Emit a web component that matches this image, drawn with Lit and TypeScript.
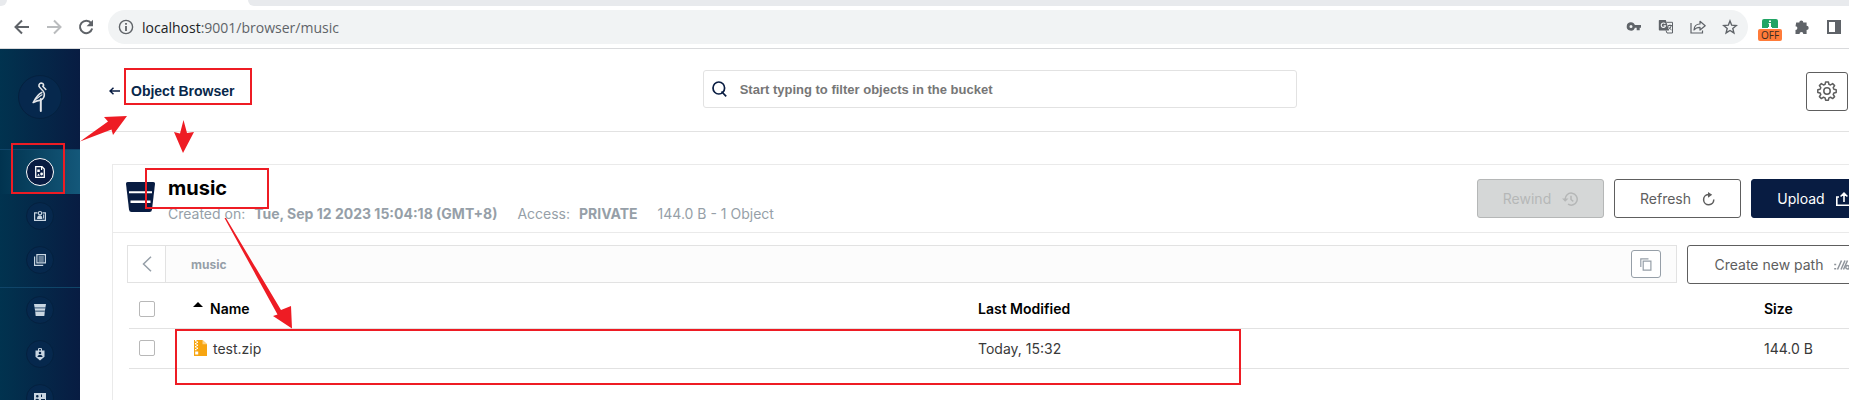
import { LitElement, html, css, svg } from "lit";
import { customElement } from "lit/decorators.js";

const INK = "#5f6368";

const icons = {
  back: html`<svg width="16" height="16" viewBox="0 0 16 16" fill="none" stroke=${INK} stroke-width="2"><path d="M15 8H2M8 1.5 1.5 8 8 14.5"/></svg>`,
  forward: html`<svg width="16" height="16" viewBox="0 0 16 16" fill="none" stroke="#babcbe" stroke-width="2"><path d="M1 8h13M8 1.5 14.5 8 8 14.5"/></svg>`,
  reload: html`<svg width="16" height="16" viewBox="0 0 16 16"><path d="M13.2 4.2A6.2 6.2 0 1 0 14.2 9.6" fill="none" stroke=${INK} stroke-width="2"/><path d="M15 .8v6.4H8.6z" fill=${INK}/></svg>`,
  info: html`<svg width="16" height="16" viewBox="0 0 16 16"><circle cx="8" cy="8" r="6.6" fill="none" stroke=${INK} stroke-width="1.4"/><path d="M7.1 7h1.8v5H7.1zM7.1 4h1.8v1.7H7.1z" fill=${INK}/></svg>`,
  key: html`<svg width="16" height="16" viewBox="0 0 16 16"><path fill=${INK} fill-rule="evenodd" d="M5 3.2a4.2 4.2 0 1 0 3.9 5.500h1.800v2.600h3V8.700H15V6.100H8.900A4.200 4.200 0 0 0 5 3.200zM5 5.900a1.500 1.500 0 1 1 0 3 1.500 1.500 0 0 1 0-3z"/></svg>`,
  translate: html`<svg width="16" height="16" viewBox="0 0 16 16"><path d="M1.500 1h6.300l3.200 10.500H1.500A1 1 0 0 1 .8 10.800V1.800A1 1 0 0 1 1.500 1z" fill=${INK}/><path d="M8.500 3.300h6V14H9L8 11.500M10 6.500h4M12 5.500v1M13.200 6.700c-.5 2-1.700 3.300-3 4M10.500 7.500c.8 1.800 1.800 2.700 3 3.400" fill="none" stroke=${INK} stroke-width="1"/><path d="M7.300 5a2.200 2.200 0 1 0 .3 1.700H5.600" fill="none" stroke="#f1f3f4" stroke-width="1.100"/></svg>`,
  share: html`<svg width="16" height="16" viewBox="0 0 16 16" fill="none" stroke=${INK} stroke-width="1.200"><path d="M1 4v10h11.500v-2.500"/><path d="M4 11c.2-4 2.500-6 6-6V2.300L15.200 6.700 10 11V8.300C7.500 8.300 5.500 9 4 11z" stroke-linejoin="round"/></svg>`,
  star: html`<svg width="16" height="16" viewBox="0 0 16 16" fill="none" stroke=${INK} stroke-width="1.400"><path d="M8 1.900l1.700 4.300 4.600.3-3.500 2.900 1.100 4.500L8 11.500l-3.900 2.400 1.100-4.500L1.700 6.500l4.600-.3z"/></svg>`,
  puzzle: html`<svg width="16" height="16" viewBox="0 0 16 16"><path fill=${INK} d="M2.200 3.500H5.300a2 2 0 1 1 4-.0h3.300v3.300a2.100 2.100 0 1 1 0 4.200v4H9.300a1.900 1.900 0 0 0-3.800 0H1.500V11a1.900 1.900 0 0 0 0-3.800z"/></svg>`,
  sidePanel: html`<svg width="14" height="14" viewBox="0 0 14 14"><path fill=${INK} fill-rule="evenodd" d="M0 0h14v14H0zM2 2v10h6V2z"/></svg>`,
  extension: html`<svg width="16" height="9" viewBox="0 0 16 9"><path d="M0 9V2a2 2 0 0 1 2-2h12a2 2 0 0 1 2 2v7z" fill="#21a464"/><path d="M7 1.500h2V3H7zM6.500 4h2.500v4h1v1H6V8h1V5h-.5z" fill="#fff"/></svg>`,
  logo: html`<svg width="16" height="30" viewBox="0 0 16 30" fill="none" stroke="#e3e6ea" stroke-linecap="round" stroke-linejoin="round"><path d="M13.800 7.500 10.800 4.200M7 4.300C6.500 2 8.200.9 10 1.200c1.500.3 2 1.900 1.200 3.200M7 4.300c.8 2.300 5 4 5.300 7.300.3 3-1.200 5.300-3.500 6.500M1.200 20.500C3 17 5.500 12.500 9.800 10.500M1.200 20.500C4 19 6.500 18.300 8.800 18.100" stroke-width="1.600"/><path d="M3.500 17.500C6 15.500 8 14 10 12.800" stroke-width="1.200"/><path d="M8.800 17v12" stroke-width="2"/></svg>`,
  objects: html`<svg width="10" height="12" viewBox="0 0 10 12"><path d="M.7.700H7L9.300 3v8.300H.7z" fill="none" stroke="#fff" stroke-width="1.300"/><path d="M2.300 3.500h2.500V6H2.300zM6 1h1.200v3H6zM5.200 8a1.400 1.400 0 1 0 2.800 0 1.400 1.400 0 0 0-2.800 0zM2.200 9.800 3.500 7.500l1.300 2.300z" fill="#fff"/></svg>`,
  accessKeys: html`<svg width="12" height="12" viewBox="0 0 12 12"><path d="M3.500 2.800H.6v7.600h10.800V2.800H8.500" fill="none" stroke="#c9d6e2" stroke-width="1.200"/><circle cx="6" cy="3.200" r="1.700" fill="none" stroke="#c9d6e2" stroke-width="1.100"/><path d="M3 9c0-2 .8-3.300 2.200-3.500h1.600C8 5.800 8.300 7.500 8.300 9z" fill="#c9d6e2"/><path d="M9.600 4.500v4" stroke="#c9d6e2"/></svg>`,
  docs: html`<svg width="12" height="12" viewBox="0 0 12 12" fill="none" stroke="#c9d6e2"><path d="M2.900.6h8.500v8.200H2.900z" stroke-width="1.200"/><path d="M.6 2.500v8.900h8.600" stroke-width="1.200"/><path d="M4.500 3h5.300M4.500 5h5.300M4.500 7h5.300"/></svg>`,
  bucketSmall: html`<svg width="12" height="12" viewBox="0 0 12 12"><path d="M0 0h12l-.5 3H.5zM.7 4.200h10.600l-.4 2.600H1.100z" fill="#c9d6e2"/><path d="M1.200 7.800h9.600L10.300 12H1.700z" fill="#c9d6e2"/><path d="M.5 3h11v1.200H.5zM1 6.800h10v1H1z" fill="#6f88a3"/></svg>`,
  policy: html`<svg width="10" height="13" viewBox="0 0 10 13"><path d="M3.500 3V.6h3V3" fill="none" stroke="#c9d6e2"/><path d="M.5 2.500h9v6.300L5 12.500.5 8.800z" fill="#c9d6e2"/><path d="M3.700 5a1.300 1.300 0 1 1 2.600 0 1.300 1.300 0 0 1-2.600 0zM2.500 9c0-1.500 1-2 2.500-2s2.500.5 2.500 2z" fill="#062548"/></svg>`,
  identity: html`<svg width="12" height="10" viewBox="0 0 12 10"><path d="M0 0h12v10H0z" fill="#c9d6e2"/><path d="M2 3.200a1.300 1.300 0 1 1 2.600 0 1.300 1.300 0 0 1-2.600 0zM1 8c.3-3 4-3 4.600 0zM7 1.500h1V4H7zM7 6h4v1.200H7z" fill="#062548"/></svg>`,
  arrowLeft: html`<svg width="11" height="8" viewBox="0 0 11 8"><path d="M11 4H2M4.500.8 1 4l3.500 3.200" fill="none" stroke="#081c42" stroke-width="1.500"/></svg>`,
  search: html`<svg width="15" height="16" viewBox="0 0 15 16" fill="none" stroke="#081c42" stroke-width="1.700"><ellipse cx="6.800" cy="7" rx="5.800" ry="6"/><path d="M9.500 10.500 14.200 15.300"/></svg>`,
  gear: html`<svg width="20" height="20" viewBox="0 0 20 20" fill="none" stroke="#5e5e5e" stroke-width="1.500"><circle cx="10" cy="10" r="3.200"/><path stroke-linejoin="round" d="M8.600.9h2.800l.5 2.400 1.600.7 2.100-1.400 2 2-1.400 2.100.7 1.600 2.300.4v2.700l-2.300.5-.7 1.600 1.400 2.100-2 2-2.100-1.400-1.600.7-.5 2.300H8.600l-.5-2.300-1.600-.7-2.100 1.400-2-2 1.400-2.100-.7-1.600-2.300-.5V8.700l2.300-.4.7-1.600-1.400-2.100 2-2L6.500 4l1.600-.7z"/></svg>`,
  bucket: html`<svg width="29" height="30" viewBox="0 0 29 30"><path d="M2 0h25q2.200 0 2 2l-3 25.500q-.3 2.500-2.500 2.500h-18Q3.300 30 3 27.500L0 2Q-.2 0 2 0z" fill="#081c42"/><path d="M3 9.200h23v2H3zM4.500 18.500h20v2.400h-20z" fill="#fff"/></svg>`,
  rewind: html`<svg width="16" height="14" viewBox="0 0 16 14" fill="none" stroke="#b5b7b7" stroke-width="1.500"><path d="M3.200 7.500A6 6 0 1 1 6 12.200"/><path d="M9 3.800V7.500l2.300 1.800"/><path d="M0 6.500h6.500L3.200 9.800z" fill="#b5b7b7" stroke="none"/></svg>`,
  refresh: html`<svg width="13" height="14" viewBox="0 0 13 14"><path d="M7.500 2.600H6.300a5.100 5.100 0 1 0 5.500 5" fill="none" stroke="#5e5e5e" stroke-width="1.500"/><path d="M6 0l4.200 2.700L6 5.800z" fill="#5e5e5e"/></svg>`,
  upload: html`<svg width="16" height="14" viewBox="0 0 16 14" fill="none" stroke="#fff" stroke-width="1.600"><path d="M3 5H.8v8.200h14.400V5H13M8 10V1.500M4.600 4.500 8 1.200l3.400 3.300"/></svg>`,
  path: html`<svg width="16" height="10" viewBox="0 0 16 10" fill="none" stroke="#8f949b" stroke-width="1.500"><path d="M.2 4.500h2M.2 8.800h2M3.500 9.500 7.500.5M7 9.500 11 .5M9.500 9.500 13.500.5"/><circle cx="13.500" cy="7.300" r="1.700"/></svg>`,
  chevron: html`<svg width="10" height="16" viewBox="0 0 10 16"><path d="M9 .7 1.500 8 9 15.300" fill="none" stroke="#969fa8" stroke-width="1.500"/></svg>`,
  copy: html`<svg width="12" height="13" viewBox="0 0 12 13" fill="none" stroke="#969fa8" stroke-width="1.200"><path d="M3.200 3.200h7.700v8.900H3.200z"/><path d="M.8 9V.8h7.700"/></svg>`,
  sort: html`<svg width="10" height="5" viewBox="0 0 10 5"><path d="M0 5 5 0l5 5z" fill="#000"/></svg>`,
  zip: html`<svg width="13" height="16" viewBox="0 0 13 16"><path d="M0 0h8.500L13 4.200V16H0z" fill="#f7a510"/><path d="M8.500 0 13 4.200H8.500z" fill="#fbd48a"/><path d="M1 0h1.500v1.500H1zM2.500 1.500H4V3H2.500zM1 3h1.500v1.500H1zM2.500 4.500H4V6H2.500zM1 6h1.500v1.500H1zM2.500 7.500H4V9H2.500zM1 9h1.500v1.200H1zM1.200 11.500h3v3h-3z" fill="#fff"/></svg>`,
};

@customElement("app-root")
export class AppRoot extends LitElement {
  static styles = css`
    :host { display: flex; flex-direction: column; height: 100vh; overflow: hidden; position: relative; background: #fff; font-family: Inter, "Liberation Sans", sans-serif; font-size: 14px; color: #000; }
    * { box-sizing: border-box; }
    svg { display: block; flex: none; }
    button { font: inherit; margin: 0; padding: 0; cursor: pointer; background: none; border: 0; display: flex; align-items: center; justify-content: center; }
    a { color: inherit; text-decoration: none; }

    .tabs { flex: none; height: 6px; background: #e8eaed; display: flex; }
    .tab-gap { width: 7px; border-bottom-right-radius: 6px; background: #e8eaed; }
    .tab-active { width: 256px; background: #fff; display: flex; justify-content: space-between; }
    .tab-edge { width: 8px; background: #e8eaed; border-bottom-left-radius: 8px; }
    .toolbar { flex: none; height: 43px; padding: 4px 3px 4px 14px; display: flex; align-items: center; gap: 16px; border-bottom: 1px solid #d9dadc; }
    .address { flex: 1; height: 34px; margin-left: -2px; padding: 0 10px; border-radius: 17px; background: #f1f3f4; display: flex; align-items: center; gap: 8px; font-family: "Open Sans", sans-serif; font-size: 14px; color: #5f6368; }
    .url { flex: 1; }
    .host { color: #202124; }
    .actions { display: flex; gap: 16px; }
    .extensions { display: flex; align-items: center; gap: 8px; margin-left: -6px; }
    .extensions button { width: 24px; }
    .ext { flex-direction: column; margin-top: 6px; }
    .off { width: 24px; height: 12px; border-radius: 2px; margin-top: 1px; background: #ff7b39; color: #3a2a20; font-family: "Open Sans", sans-serif; font-size: 10px; line-height: 12px; text-align: center; }

    .app { flex: 1; min-height: 0; display: flex; }
    .sidebar { flex: none; width: 80px; overflow: hidden; background: linear-gradient(90deg, #01334f, #081c42); }
    .brand { height: 100px; display: flex; align-items: center; justify-content: center; padding-bottom: 4px; }
    .brand-mark { width: 44px; height: 44px; border-radius: 50%; background: #06284d; border: 1px solid #04213f; display: flex; align-items: center; justify-content: center; }
    .group { border-top: 1px solid #0f4569; padding-bottom: 5px; }
    .item { height: 44px; display: flex; align-items: center; justify-content: center; }
    .item.on { background: linear-gradient(90deg, #01334f, #14587a); }
    .dot { width: 28px; height: 28px; border-radius: 50%; background: #06284d; border: 1px solid #04213f; display: flex; align-items: center; justify-content: center; }
    .on .dot { background: #081c42; border-color: #fff; }

    .main { flex: 1; min-width: 0; overflow: hidden; }
    .header { height: 83px; padding: 2px 1px 0 29px; border-bottom: 1px solid #e2e2e2; display: grid; grid-template-columns: 14fr 594px 13fr; align-items: center; }
    .back { display: flex; align-items: center; gap: 11px; font-family: "Liberation Sans", sans-serif; font-weight: 700; color: #07274a; }
    .search { height: 38px; margin-bottom: 4px; border: 1px solid #e2e2e2; border-radius: 3px; display: flex; align-items: center; gap: 13px; padding: 0 8px; }
    .search input { flex: 1; min-width: 0; border: 0; outline: 0; padding: 0; background: none; font: 700 13px "Liberation Sans", sans-serif; color: #000; }
    .search input::placeholder { color: #767676; opacity: 1; }
    .settings { justify-self: end; width: 42px; height: 39px; border: 1px solid #5e5e5e; border-radius: 3px; }

    .panel { margin: 32px -44px 0 32px; height: 300px; border: 1px solid #eaeaea; }
    .panel-head { height: 68px; padding: 0 14px 0 13px; border-bottom: 1px solid #eaeaea; display: flex; align-items: center; gap: 13px; }
    .mark { padding-bottom: 4px; }
    .info { flex: 1; }
    h1 { margin: 0; font-size: 20px; line-height: 26px; font-weight: 700; }
    .meta { margin-top: 4px; display: flex; gap: 20px; line-height: 18px; color: #969fa8; white-space: nowrap; }
    .meta b { font-weight: 700; margin-left: 5px; }
    .buttons { display: flex; gap: 10px; }
    .btn { height: 39px; width: 127px; gap: 11px; border: 1px solid #5e5e5e; border-radius: 3px; color: #5e5e5e; white-space: nowrap; }
    .btn.wide { width: 191px; }
    .btn.solid { background: #081c42; border-color: #081c42; color: #fff; }
    .btn:disabled { background: #d5d7d7; border-color: #b5b7b7; color: #b5b7b7; }
    .path-row { display: flex; gap: 10px; padding: 12px 14px 0; }
    .crumbs { flex: 1; height: 38px; border: 1px solid #e2e2e2; background: #fcfcfc; display: flex; align-items: center; color: #969fa8; font-weight: 700; font-size: 12px; padding-right: 15px; }
    .up { width: 38px; height: 36px; background: #fff; border-right: 1px solid #e2e2e2; }
    .crumb { flex: 1; padding-left: 25px; }
    .copy { width: 30px; height: 28px; border: 1px solid #969fa8; border-radius: 3px; background: #fff; }

    .files { padding: 4px 14px 0 16px; }
    table { width: 100%; table-layout: fixed; border-collapse: collapse; }
    th, td { height: 40px; padding: 0; border-bottom: 1px solid #e2e2e2; text-align: left; vertical-align: middle; }
    th { font-weight: 600; padding-top: 2px; }
    td { color: #393939; }
    .c-check { width: 63px; }
    .c-size { width: 114px; }
    .name { display: flex; align-items: center; gap: 6px; padding-left: 2px; }
    .sort svg { margin-bottom: 8px; }
    .sort { padding-left: 1px; gap: 7px; }
    input[type="checkbox"] { appearance: none; display: block; width: 16px; height: 16px; margin: 0 0 0 10px; border: 1px solid #b8b8b8; border-radius: 2px; background: #fff; }

    .marks { position: absolute; inset: 0; width: 100%; height: 100%; pointer-events: none; }
  `;

  private rows = [{ name: "test.zip", modified: "Today, 15:32", size: "144.0 B" }];

  private boxes = [
    [125, 69, 126, 35],
    [12, 144, 52, 49],
    [146, 169, 122, 39],
    [176, 330, 1064, 54],
  ];

  private nav(label: string, icon: unknown, on = false) {
    return html`<a class="item ${on ? "on" : ""}" href="#" aria-label=${label}><span class="dot">${icon}</span></a>`;
  }

  render() {
    return html`
      <div class="tabs"><div class="tab-active"><span class="tab-gap"></span><span class="tab-edge"></span></div></div>
      <div class="toolbar">
        <button aria-label="Back">${icons.back}</button>
        <button aria-label="Forward">${icons.forward}</button>
        <button aria-label="Reload">${icons.reload}</button>
        <div class="address">
          ${icons.info}
          <span class="url"><span class="host">localhost</span>:9001/browser/music</span>
          <span class="actions">
            <button aria-label="Passwords">${icons.key}</button>
            <button aria-label="Translate">${icons.translate}</button>
            <button aria-label="Share">${icons.share}</button>
            <button aria-label="Bookmark">${icons.star}</button>
          </span>
        </div>
        <div class="extensions">
          <button class="ext">${icons.extension}<span class="off">OFF</span></button>
          <button aria-label="Extensions">${icons.puzzle}</button>
          <button aria-label="Side panel">${icons.sidePanel}</button>
        </div>
      </div>
      <div class="app">
        <nav class="sidebar">
          <div class="brand"><span class="brand-mark">${icons.logo}</span></div>
          <div class="group">
            ${this.nav("Object Browser", icons.objects, true)}
            ${this.nav("Access Keys", icons.accessKeys)}
            ${this.nav("Documentation", icons.docs)}
          </div>
          <div class="group">
            ${this.nav("Buckets", icons.bucketSmall)}
            ${this.nav("Policies", icons.policy)}
            ${this.nav("Identity", icons.identity)}
          </div>
        </nav>
        <main class="main">
          <header class="header">
            <a class="back" href="#">${icons.arrowLeft}<span>Object Browser</span></a>
            <label class="search">${icons.search}<input type="text" aria-label="Filter objects" placeholder="Start typing to filter objects in the bucket" /></label>
            <button class="settings" aria-label="Settings">${icons.gear}</button>
          </header>
          <section class="panel">
            <div class="panel-head">
              <span class="mark">${icons.bucket}</span>
              <div class="info">
                <h1>music</h1>
                <div class="meta">
                  <span>Created on: <b>Tue, Sep 12 2023 15:04:18 (GMT+8)</b></span>
                  <span>Access: <b>PRIVATE</b></span>
                  <span>144.0 B - 1 Object</span>
                </div>
              </div>
              <div class="buttons">
                <button class="btn" disabled>Rewind ${icons.rewind}</button>
                <button class="btn">Refresh ${icons.refresh}</button>
                <button class="btn solid">Upload ${icons.upload}</button>
              </div>
            </div>
            <div class="path-row">
              <div class="crumbs">
                <button class="up" aria-label="Up">${icons.chevron}</button>
                <a class="crumb" href="#">music</a>
                <button class="copy" aria-label="Copy path">${icons.copy}</button>
              </div>
              <button class="btn wide">Create new path ${icons.path}</button>
            </div>
            <div class="files">
              <table>
                <thead>
                  <tr>
                    <th class="c-check"><input type="checkbox" aria-label="Select all" /></th>
                    <th><span class="name sort">${icons.sort}Name</span></th>
                    <th>Last Modified</th>
                    <th class="c-size">Size</th>
                  </tr>
                </thead>
                <tbody>
                  ${this.rows.map((r) => html`<tr>
                    <td><input type="checkbox" aria-label="Select ${r.name}" /></td>
                    <td><span class="name">${icons.zip}${r.name}</span></td>
                    <td>${r.modified}</td>
                    <td>${r.size}</td>
                  </tr>`)}
                </tbody>
              </table>
            </div>
          </section>
        </main>
      </div>
      <svg class="marks" fill="none">
        ${this.boxes.map(([x, y, w, h]) => svg`<rect x=${x} y=${y} width=${w} height=${h} stroke="#ee1c24" stroke-width="2"/>`)}
        <path fill="#ee1c24" d="M80 141.500 108 121.500 104 117 127 116 113 135 111.500 129.500zM183.500 120 187 133 194 132 183 153 174 132 180 133.500zM224.500 218H226L281 310 291 306 292 328.500 273 316 277.500 314.500z"/>
      </svg>
    `;
  }
}
